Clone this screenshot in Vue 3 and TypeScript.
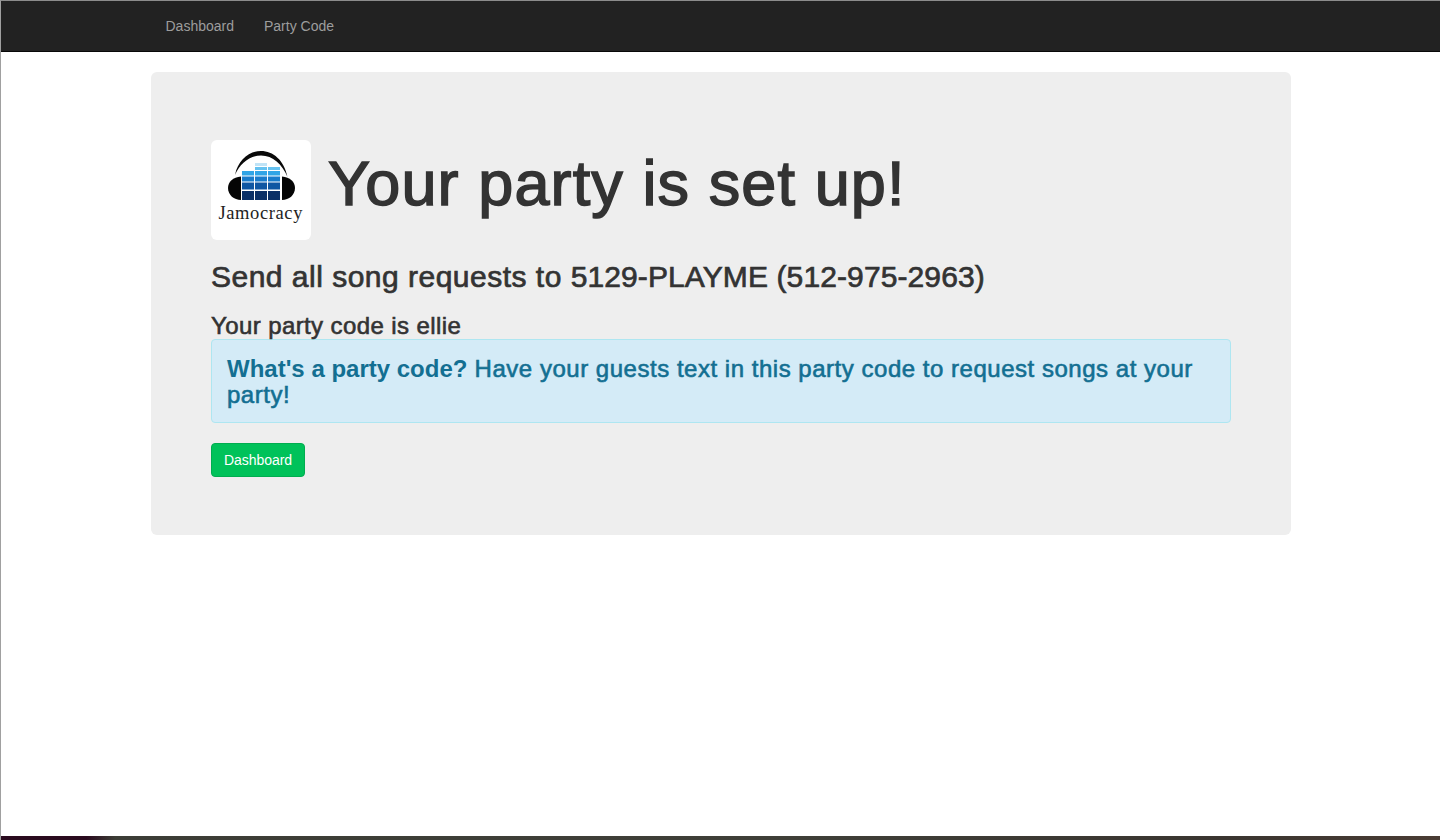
<script setup lang="ts">
const navLinks: string[] = ['Dashboard', 'Party Code']
const columns: number[] = [31, 44, 57]
const rows = [
  { y: 51, h: 9, fill: '#0a2f66' },
  { y: 42.5, h: 7, fill: '#0f57a3' },
  { y: 36.5, h: 5, fill: '#1a7ccb' },
  { y: 31, h: 4.5, fill: '#31a5e6' },
]
</script>

<template>
  <div class="window">
    <nav class="navbar">
      <div class="nav-inner">
        <a v-for="link in navLinks" :key="link" class="nav-link" href="#">{{ link }}</a>
      </div>
    </nav>

    <main class="container">
      <section class="jumbotron">
        <h1 class="title">
          <svg class="logo" width="100" height="100" viewBox="0 0 100 100">
            <rect width="100" height="100" rx="6" fill="#fff" />
            <path d="M24 35C27 20 38 11 50 11C62 11 73 20 76.500 37C71 24 62 15.500 50 15.500C38 15.500 29 24 24 35Z" fill="#0a0a0a" />
            <path d="M30 36.500C22 37 17 42 17 48C17 55 23 60 30 60Z" fill="#050505" />
            <path d="M71 36.500C79 37 84 42 84 48C84 55 78 60 71 60Z" fill="#050505" />
            <template v-for="x in columns" :key="x">
              <rect v-for="row in rows" :key="row.y" :x="x" :y="row.y" width="12" :height="row.h" :fill="row.fill" />
            </template>
            <rect x="44" y="27" width="12" height="3" fill="#66c2f0" />
            <rect x="57" y="27" width="12" height="3" fill="#66c2f0" />
            <rect x="44" y="23" width="12" height="3" fill="#bfe3f6" />
            <text x="7.500" y="79" class="logo-text">Jamocracy</text>
          </svg>
          <span class="title-text">Your party is set up!</span>
        </h1>

        <h3 class="send">Send all song requests to <span class="send-number">5129-PLAYME (512-975-2963)</span></h3>
        <h4 class="code">Your party code is ellie</h4>

        <div class="alert">
          <strong class="alert-lead">What's a party code?</strong> Have your guests text in this party code to request songs at your party!
        </div>

        <a class="btn" href="#">Dashboard</a>
      </section>
    </main>

    <div class="desktop"></div>
  </div>
</template>

<style>
html,
body {
  margin: 0;
  background: #fff;
}
</style>

<style scoped>
.window {
  position: relative;
  height: 840px;
  overflow: hidden;
  box-sizing: border-box;
  display: flex;
  flex-direction: column;
  font-family: "Liberation Sans", Arial, sans-serif;
  color: #333;
  border-top: 1px solid #8c8c8c;
  border-left: 1px solid #a0a0a0;
}
.navbar {
  height: 50px;
  flex: none;
  background: #222;
  border-bottom: 1px solid #080808;
}
.nav-inner {
  margin-left: 149.500px;
  display: flex;
}
.nav-link {
  padding: 15px;
  font-size: 14px;
  line-height: 20px;
  color: #9d9d9d;
  text-decoration: none;
}
.container {
  flex: 1;
  padding: 20px 0 0 150px;
}
.jumbotron {
  width: 1140px;
  height: 463px;
  box-sizing: border-box;
  padding: 68px 60px 0;
  background: #eee;
  border-radius: 6px;
}
.title {
  display: flex;
  gap: 17px;
  margin: 0;
  font-size: 63px;
  font-weight: 400;
  letter-spacing: 1.1px;
  -webkit-text-stroke: 1.5px #333;
}
.title-text {
  line-height: 86px;
}
.logo {
  flex: none;
}
.logo-text {
  font-family: "Liberation Serif", "Times New Roman", serif;
  font-size: 18.500px;
  letter-spacing: 0.6px;
  fill: #222;
  -webkit-text-stroke: 0;
}
.send {
  margin: 20px 0 0;
  font-size: 30px;
  font-weight: 400;
  line-height: 34px;
  letter-spacing: 0.49px;
  -webkit-text-stroke: 0.7px #333;
}
.send-number {
  letter-spacing: 0.11px;
}
.code {
  margin: 19px 0 0;
  font-size: 24px;
  font-weight: 400;
  line-height: 26px;
  letter-spacing: 0.4px;
  -webkit-text-stroke: 0.6px #333;
}
.alert {
  padding: 16px 15px 14px;
  font-size: 24px;
  line-height: 26px;
  letter-spacing: 0.52px;
  color: #136f92;
  background: #d4ebf7;
  border: 1px solid #aee6f1;
  border-radius: 4px;
  -webkit-text-stroke: 0.6px #136f92;
}
.alert-lead {
  letter-spacing: 0;
  -webkit-text-stroke: 0;
}
.btn {
  display: inline-block;
  margin-top: 20px;
  padding: 6px 12px;
  font-size: 14px;
  line-height: 20px;
  letter-spacing: -0.05px;
  color: #fff;
  text-decoration: none;
  background: #00c25a;
  border: 1px solid #00ad50;
  border-radius: 4px;
}
.desktop {
  height: 4px;
  flex: none;
  margin-left: -1px;
  background: linear-gradient(90deg, #2a0a1e 0%, #2a0a1e 6%, #3c3d36 8%, #3f3f38 55%, #3a3530 85%, #4a3c34 100%);
}
</style>
